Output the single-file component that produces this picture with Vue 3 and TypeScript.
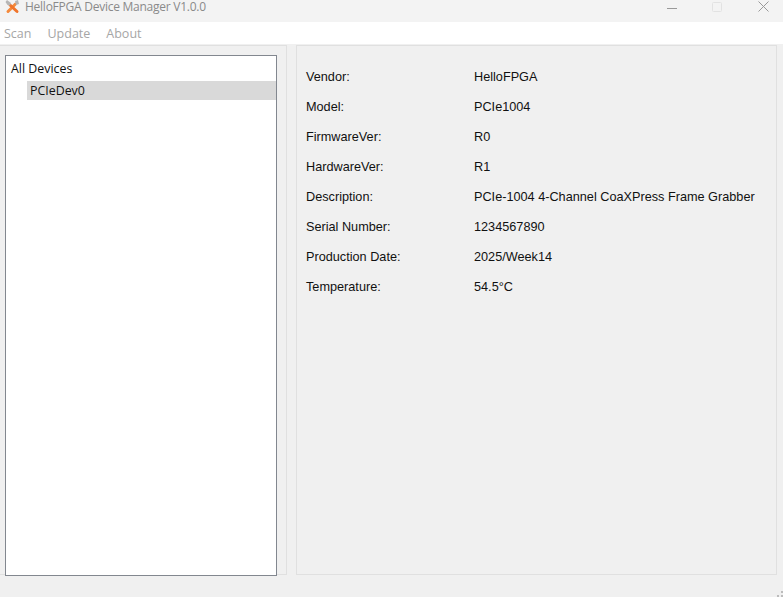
<script setup lang="ts">
const menus: string[] = ['Scan', 'Update', 'About']
const rows: { label: string; value: string }[] = [
  { label: 'Vendor:', value: 'HelloFPGA' },
  { label: 'Model:', value: 'PCIe1004' },
  { label: 'FirmwareVer:', value: 'R0' },
  { label: 'HardwareVer:', value: 'R1' },
  { label: 'Description:', value: 'PCIe-1004 4-Channel CoaXPress Frame Grabber' },
  { label: 'Serial Number:', value: '1234567890' },
  { label: 'Production Date:', value: '2025/Week14' },
  { label: 'Temperature:', value: '54.5°C' },
]
</script>

<template>
  <div class="window">
    <header class="titlebar">
      <svg class="logo" width="16" height="14" viewBox="0 0 16 14">
        <path d="M3 11.500 L10.500 4" stroke="#f58a3c" stroke-width="3" stroke-linecap="round" />
        <path d="M5 5 L12 11.500" stroke="#f0742a" stroke-width="3" stroke-linecap="round" />
        <path d="M2 0 L6 3 L5 5.500 L2.500 5 L0.500 2Z" fill="#b5b5b5" />
        <path d="M10 1 L13 0 L14 4 L11 5Z" fill="#b5b5b5" />
      </svg>
      <span class="title">HelloFPGA Device Manager V1.0.0</span>
      <div class="controls">
        <svg width="10" height="10" viewBox="0 0 10 10"><path d="M0 6.500H10" stroke="#999" /></svg>
        <svg width="10" height="10" viewBox="0 0 10 10"><rect x="0.500" y="0.500" width="9" height="9" rx="1" fill="none" stroke="#e2e2e2" /></svg>
        <svg class="close" width="11" height="11" viewBox="0 0 11 11"><path d="M0.500 0.500L10.500 10.500M10.500 0.500L0.500 10.500" stroke="#999" /></svg>
      </div>
    </header>
    <nav class="menubar">
      <span v-for="m in menus" :key="m" class="menu">{{ m }}</span>
    </nav>
    <main class="body">
      <section class="left">
        <div class="tree">
          <div class="root">All Devices</div>
          <div class="node">PCIeDev0</div>
        </div>
      </section>
      <section class="right">
        <div v-for="r in rows" :key="r.label" class="row">
          <span class="label">{{ r.label }}</span>
          <span class="value">{{ r.value }}</span>
        </div>
      </section>
    </main>
    <svg class="grip" width="6" height="6" viewBox="0 0 6 6" fill="#bcbcbc">
      <rect x="4" y="0" width="2" height="2" />
      <rect x="0" y="4" width="2" height="2" />
      <rect x="4" y="4" width="2" height="2" />
    </svg>
  </div>
</template>

<style>
html, body { margin: 0; background: #f0f0f0; }
</style>

<style scoped>
.window {
  position: relative;
  width: 783px;
  height: 597px;
  overflow: hidden;
  background: #f0f0f0;
  display: flex;
  flex-direction: column;
}
.titlebar {
  height: 22px;
  background: #f3f3f3;
  display: flex;
  align-items: flex-start;
  padding-left: 5px;
  box-sizing: border-box;
  position: relative;
}
.title {
  margin-left: 4px;
  font: 12px/13px "Open Sans", sans-serif;
  letter-spacing: -0.250px;
  color: #8a8a8a;
  white-space: nowrap;
}
.controls {
  margin-left: auto;
  display: flex;
  align-items: center;
  gap: 35px;
  padding-right: 14px;
  margin-top: 1px;
}
.close { margin-left: 1px; }
.menubar {
  height: 22px;
  background: #fff;
  display: flex;
  gap: 16px;
  padding-left: 4px;
  align-items: center;
  font: 12.500px "Open Sans", sans-serif;
  color: #a6a6a6;
}
.body {
  flex: 1;
  display: flex;
  align-items: flex-start;
  padding: 1px 6px 0 0;
}
.left {
  width: 287px;
  height: 530px;
  box-sizing: border-box;
  border: 1px solid #e0e0e0;
  border-left: 0;
  padding: 9px 9px 0 5px;
  flex: none;
}
.tree {
  height: 521px;
  box-sizing: border-box;
  border: 1px solid #82878f;
  background: #fff;
  padding: 3px 0 0 5px;
  font: 12.400px "Open Sans", sans-serif;
  color: #111;
}
.root { height: 22px; line-height: 20px; }
.node {
  margin-left: 16px;
  height: 19px;
  line-height: 19px;
  background: #d9d9d9;
  padding-left: 3px;
}
.right {
  margin-left: 9px;
  flex: 1;
  height: 530px;
  box-sizing: border-box;
  border: 1px solid #e0e0e0;
  padding: 16px 0 0 9px;
  font: 12.700px "Liberation Sans", sans-serif;
  color: #111;
}
.row { height: 30px; line-height: 30px; display: flex; }
.label { width: 168px; flex: none; }
.value { white-space: nowrap; }
.grip { position: absolute; right: 0; bottom: 0; }
</style>
